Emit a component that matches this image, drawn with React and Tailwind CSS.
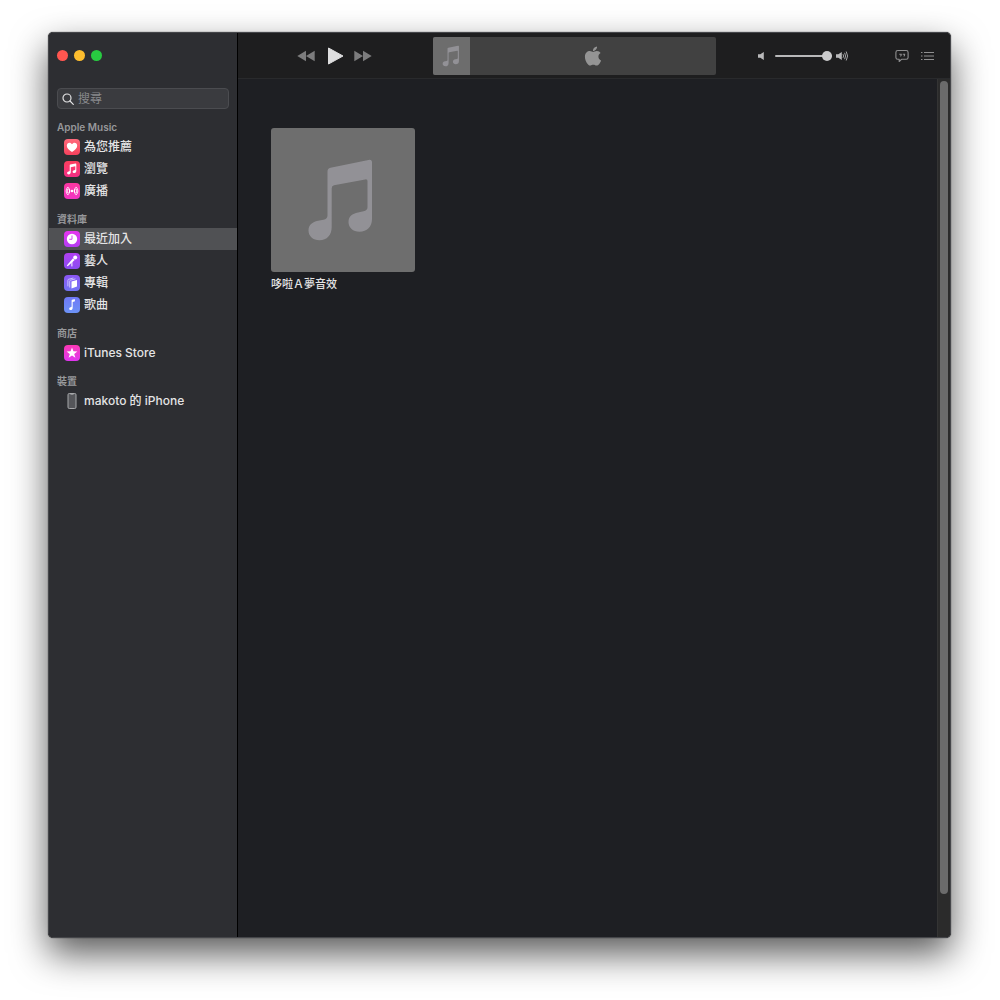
import { useState } from 'react';
import { FaApple } from 'react-icons/fa';

const sections = [
  {
    title: 'Apple Music',
    items: [
      { name: '為您推薦', icon: HeartIcon, color: 'bg-linear-to-b from-[#ff6a7c] to-[#f5405c]' },
      { name: '瀏覽', icon: NoteIcon, color: 'bg-linear-to-b from-[#fb3f5c] to-[#f52d86]' },
      { name: '廣播', icon: RadioIcon, color: 'bg-linear-to-b from-[#fb37a0] to-[#f333c4]' },
    ],
  },
  {
    title: '資料庫',
    items: [
      { name: '最近加入', icon: ClockIcon, color: 'bg-linear-to-b from-[#e633ee] to-[#b23cf2]' },
      { name: '藝人', icon: MicIcon, color: 'bg-linear-to-b from-[#b03ff0] to-[#8a4cf2]' },
      { name: '專輯', icon: AlbumIcon, color: 'bg-linear-to-b from-[#8b55f4] to-[#7274f5]' },
      { name: '歌曲', icon: SongIcon, color: 'bg-linear-to-b from-[#6f78f6] to-[#6c92f6]' },
    ],
  },
  {
    title: '商店',
    items: [{ name: 'iTunes Store', icon: StarIcon, color: 'bg-linear-to-b from-[#fb37b4] to-[#e035f0]' }],
  },
  {
    title: '裝置',
    items: [{ name: 'makoto 的 iPhone', icon: PhoneIcon, color: '' }],
  },
];

function HeartIcon() {
  return (
    <svg viewBox="0 0 16 16" className="h-4 w-4" fill="white">
      <path d="M8 13C4.900 11 2.800 9 2.800 6.700c0-1.700 1.200-2.900 2.700-2.900 1 0 1.900.6 2.500 1.500.6-.9 1.500-1.500 2.500-1.500 1.500 0 2.700 1.200 2.700 2.900C13.200 9 11.100 11 8 13z" />
    </svg>
  );
}

function NoteIcon() {
  return (
    <svg viewBox="0 0 16 16" className="h-4 w-4" fill="white">
      <path d="M5.700 4.300c0-.4.200-.6.600-.7l5.200-1.200c.5-.1.800.1.800.6v6.700c0 1.500-.9 2.300-2.100 2.300-.9 0-1.600-.5-1.600-1.300 0-.8.6-1.300 1.500-1.500l.8-.2c.3-.1.400-.2.400-.4V5.300L6.800 6.300v4.800c0 1.500-.9 2.300-2.100 2.300-.9 0-1.600-.6-1.600-1.400 0-.8.6-1.300 1.500-1.500l.7-.2c.3-.1.400-.2.400-.5z" />
    </svg>
  );
}

function RadioIcon() {
  return (
    <svg viewBox="0 0 16 16" className="h-4 w-4" fill="none" stroke="white" strokeLinecap="round">
      <circle cx="8" cy="8" r="1.300" fill="white" stroke="none" />
      <path d="M5.200 6.200Q6.300 8 5.200 9.800M10.800 6.200Q9.700 8 10.800 9.800" />
      <path d="M3.600 4.200Q.3 8 3.600 11.800M12.400 4.200Q15.700 8 12.400 11.800M3.600 6.200Q2.600 8 3.600 9.800M12.400 6.200Q13.400 8 12.400 9.800M4.700 4.600Q7.300 8 4.700 11.400M11.300 4.600Q8.700 8 11.300 11.400" strokeWidth="0.800" />
    </svg>
  );
}

function ClockIcon() {
  return (
    <svg viewBox="0 0 16 16" className="h-4 w-4">
      <circle cx="8" cy="8" r="5.200" fill="white" />
      <path d="M8 4.500V8.300H5.200" fill="none" stroke="#cc3aef" strokeWidth="0.900" />
    </svg>
  );
}

function MicIcon() {
  return (
    <svg viewBox="0 0 16 16" className="h-4 w-4">
      <circle cx="11.200" cy="4.500" r="2" fill="white" />
      <path d="M9 5.200l1.700 1.700L3.700 13.300l-.9-.9z" fill="white" />
      <path d="M7.900 8.500v4.500" stroke="white" strokeWidth="1" strokeLinecap="round" />
    </svg>
  );
}

function AlbumIcon() {
  return (
    <svg viewBox="0 0 16 16" className="h-4 w-4">
      <path d="M7.500 6.500l5.500-1.400v6.300l-5.500 2z" fill="white" />
      <path d="M5.700 12.500V6.200q0-.8.7-1l5-1.300M3.900 11.300V5.300q0-.8.7-1l4.800-1.300" fill="none" stroke="#d3ccff" strokeWidth="0.900" />
    </svg>
  );
}

function SongIcon() {
  return (
    <svg viewBox="0 0 16 16" className="h-4 w-4" fill="white">
      <path d="M7.600 3.400c0-.4.200-.6.500-.7l2.200-.5c.4-.1.600.1.600.4v1.500c0 .3-.1.500-.4.500l-1.800.4v5.700c0 1.400-.9 2.300-2 2.300-.9 0-1.500-.5-1.500-1.300 0-.7.500-1.200 1.300-1.400l.7-.2c.3-.1.400-.3.400-.5z" />
    </svg>
  );
}

function StarIcon() {
  return (
    <svg viewBox="0 0 16 16" className="h-4 w-4" fill="white">
      <path d="M8 2.600l1.400 3.700 4 .1-3.200 2.500 1.200 3.900L8 10.500l-3.400 2.300 1.200-3.900-3.200-2.500 4-.1z" />
    </svg>
  );
}

function PhoneIcon() {
  return (
    <svg viewBox="0 0 16 16" className="h-4 w-4" fill="#55565a" stroke="#a7a8aa" strokeWidth="1">
      <rect x="4" y="0.500" width="8" height="15" rx="1.300" />
      <path d="M6.500 1.200h3" />
    </svg>
  );
}

function CoverArt({ className }) {
  return (
    <svg viewBox="0 0 144 144" className={className}>
      <path
        fill="#929196"
        d="M56.500 43.500q0-3 3-3.700L97.500 32q3.500-.7 3.500 2.500V91c0 8-5 12.700-12.500 12.700-6.500 0-11-4-11-9.700 0-5.500 3.800-8.500 9.500-9.500l5.500-1.200q4-.8 4-4V53q0-2-2.300-1.600L63 57.200q-2.300.5-2.300 3V99c0 8-4.700 13.200-12.200 13.200-6.500 0-11-4-11-9.700 0-5.500 3.800-8.700 9.500-9.800l5.500-1q4-.8 4-4.500z"
      />
    </svg>
  );
}

function Sidebar() {
  const [selected, setSelected] = useState('最近加入');

  return (
    <aside className="flex w-[189px] shrink-0 flex-col border-r border-black bg-[#2d2e32]">
      <div className="flex h-[45px] shrink-0 items-center gap-1.5 pl-2">
        <button aria-label="關閉" className="h-[11px] w-[11px] rounded-full bg-[#ff5650]" />
        <button aria-label="縮到最小" className="h-[11px] w-[11px] rounded-full bg-[#fdbd2e]" />
        <button aria-label="全螢幕" className="h-[11px] w-[11px] rounded-full bg-[#28cb41]" />
      </div>

      <label className="mx-2 mt-2.5 flex h-[21px] items-center gap-1 rounded-[4px] border border-[#4b4c50] bg-[#3a3b3f] px-1">
        <svg viewBox="0 0 12 12" className="h-3 w-3 shrink-0" fill="none" stroke="#e2e2e3" strokeWidth="1.200" strokeLinecap="round">
          <circle cx="5" cy="5" r="4" />
          <path d="M8 8l3.300 3.300" />
        </svg>
        <input
          type="search"
          aria-label="搜尋"
          placeholder="搜尋"
          className="w-full min-w-0 bg-transparent text-[12px] leading-4 text-white outline-none placeholder:text-[#88898c]"
        />
      </label>

      <nav className="mt-[9px] flex flex-col gap-2">
        {sections.map((section) => (
          <div key={section.title}>
            <h2 className="pl-2 text-[10px] leading-[18px] font-semibold text-[#97989b]">{section.title}</h2>
            <ul>
              {section.items.map(({ name, icon: Icon, color }) => (
                <li key={name}>
                  <a
                    href="#"
                    onClick={(e) => {
                      e.preventDefault();
                      setSelected(name);
                    }}
                    className={`flex h-[22px] items-center gap-1 pl-[15px] text-[12px] font-medium text-[#e4e4e5] ${
                      selected === name ? 'bg-[#505154]' : ''
                    }`}
                  >
                    <span className={`rounded-[4px] ${color}`}>
                      <Icon />
                    </span>
                    {name}
                  </a>
                </li>
              ))}
            </ul>
          </div>
        ))}
      </nav>
    </aside>
  );
}

function Toolbar() {
  const [volume, setVolume] = useState(100);

  return (
    <header className="flex h-[46px] shrink-0 items-center border-b border-[#292a2c] bg-[#1e1e1f]">
      <div className="flex items-center gap-2.5 pr-[61px] pl-[59px]">
        <button aria-label="上一首">
          <svg viewBox="0 0 18 12" className="h-3 w-[18px]" fill="#7c7c7d">
            <path d="M9 .8v10.400L.3 6zM17.700.8v10.400L9 6z" />
          </svg>
        </button>
        <button aria-label="播放" className="ml-0.5">
          <svg viewBox="0 0 17 18" className="h-[18px] w-[17px]" fill="#dededf" stroke="#dededf" strokeLinejoin="round">
            <path d="M1.500 1v16l14.500-8z" />
          </svg>
        </button>
        <button aria-label="下一首">
          <svg viewBox="0 0 18 12" className="h-3 w-[18px]" fill="#7c7c7d">
            <path d="M9 .8v10.400L17.700 6zM.3.8v10.400L9 6z" />
          </svg>
        </button>
      </div>

      <div className="flex h-[38px] min-w-0 flex-1 items-center rounded-[2px] bg-[#414141]">
        <div className="h-full w-[37px] rounded-l-[2px] bg-[#6d6d6d]">
          <CoverArt className="h-full w-full" />
        </div>
        <div className="flex flex-1 justify-center">
          <FaApple className="h-[22px] w-[22px] text-[#949494]" />
        </div>
      </div>

      <div className="ml-[42px] flex items-center">
        <svg viewBox="0 0 7 10" className="h-2.5 w-[7px]" fill="#b9b9ba">
          <path d="M0 3.200h2.300L5.800.9v8.200L2.300 6.800H0z" />
        </svg>
        <input
          type="range"
          aria-label="音量"
          value={volume}
          onChange={(e) => setVolume(e.target.value)}
          className="mr-2 ml-2.5 h-2.5 w-[57px] appearance-none bg-transparent [&::-webkit-slider-runnable-track]:h-0.5 [&::-webkit-slider-runnable-track]:rounded-full [&::-webkit-slider-runnable-track]:bg-[#b9b9ba] [&::-webkit-slider-thumb]:-mt-1 [&::-webkit-slider-thumb]:h-2.5 [&::-webkit-slider-thumb]:w-2.5 [&::-webkit-slider-thumb]:appearance-none [&::-webkit-slider-thumb]:rounded-full [&::-webkit-slider-thumb]:bg-[#cbcbcc]"
        />
        <svg viewBox="0 0 13 10" className="-ml-1 h-2.5 w-[13px]" fill="#b9b9ba">
          <path d="M0 3.200h2.300L5.800.9v8.200L2.300 6.800H0z" />
          <path d="M7 3.200Q8.200 5 7 6.800M8.600 1.800Q10.600 5 8.600 8.200M10.200.5Q13 5 10.200 9.500" fill="none" stroke="#a5a5a6" />
        </svg>
      </div>

      <div className="flex items-center gap-3 pr-4 pl-[46px]">
        <button aria-label="歌詞">
          <svg viewBox="0 0 14 14" className="h-3.5 w-3.5" fill="none" stroke="#8f8f90" strokeWidth="1.100">
            <path d="M2.800 1.500h8.400q1.900 0 1.900 1.900v5q0 1.900-1.900 1.900H6.500L4.200 12.500v-2.200H2.800Q.9 10.300.9 8.400v-5q0-1.900 1.900-1.900z" strokeLinejoin="round" />
            <path d="M4.300 5.200h1.900v.9q0 .9-.9 1.200M7.700 5.200h1.900v.9q0 .9-.9 1.200" />
          </svg>
        </button>
        <button aria-label="待播清單">
          <svg viewBox="0 0 13 10" className="h-2.5 w-[13px]" stroke="#8f8f90" strokeWidth="1">
            <path d="M0 1.500h1.500M3 1.500h10M0 5h1.500M3 5h10M0 8.500h1.500M3 8.500h10" />
          </svg>
        </button>
      </div>
    </header>
  );
}

export default function App() {
  return (
    <div className="flex min-h-screen bg-white pt-8 pr-[49px] pb-[62px] pl-12 font-['Inter','Noto_Sans_CJK_TC',sans-serif]">
      <div className="flex min-w-0 flex-1 overflow-hidden rounded-[5px] border border-[#45464a] bg-[#1e1f23] shadow-[0_0_1px_#000,0_16px_36px_rgba(0,0,0,0.65)]">
        <Sidebar />
        <div className="flex min-w-0 flex-1 flex-col">
          <Toolbar />
          <div className="flex flex-1">
            <main className="flex-1 pt-[49px] pl-[33px]">
              <a href="#" className="block w-36">
                <div className="rounded-[3px] bg-[#6e6e6e]">
                  <CoverArt className="h-36 w-36" />
                </div>
                <p className="mt-1 text-[11px] leading-4 font-medium text-[#e4e4e5]">哆啦Ａ夢音效</p>
              </a>
            </main>
            <div className="flex w-[13px] flex-col border-l border-[#343434] bg-[#2b2b2b] px-0.5 pt-0.5">
              <div className="h-[95%] w-2 rounded-full bg-[#6b6b6b]" />
            </div>
          </div>
        </div>
      </div>
    </div>
  );
}
